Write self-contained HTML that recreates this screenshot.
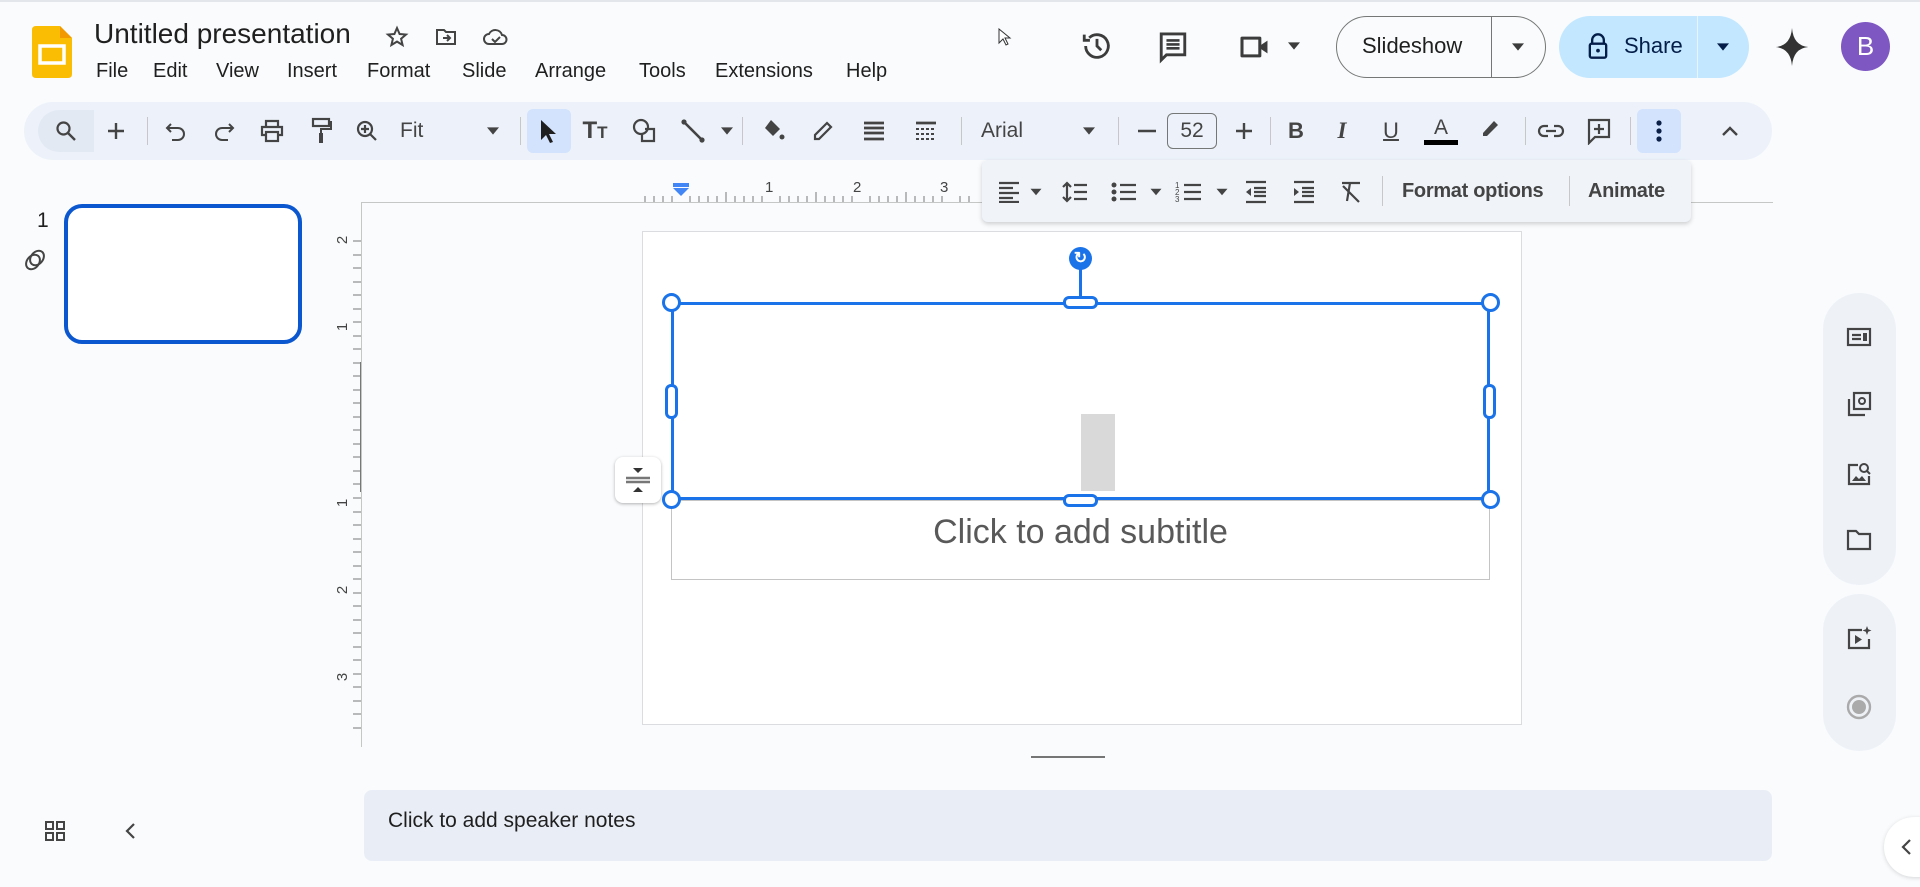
<!DOCTYPE html>
<html><head><meta charset="utf-8"><style>
*{box-sizing:border-box;margin:0;padding:0}
body{width:1920px;height:887px;background:#f9fbfd;font-family:"Liberation Sans",Arial,sans-serif;color:#1f1f1f;position:relative;overflow:hidden}
.a{position:absolute}
.menu{position:absolute;top:60px;font-size:20px;color:#1f1f1f}
.ic{position:absolute;transform:translate(-50%,-50%)}
svg{display:block}
.sep{position:absolute;width:1px;background:#c7c7c7}
.tb{position:absolute;top:131px;transform:translate(-50%,-50%)}
</style></head><body>
<div class="a" style="left:0;top:0;width:1920px;height:2px;background:#e3e6ea"></div>
<svg class="a" style="left:32px;top:26px" width="40" height="52" viewBox="0 0 40 52"><path d="M4 0H28L40 12V48Q40 52 36 52H4Q0 52 0 48V4Q0 0 4 0Z" fill="#fbbc04"/><path d="M28 0L40 12H28Z" fill="#f29900"/><rect x="8" y="20" width="24" height="17" fill="none" stroke="#fff" stroke-width="3.5"/></svg>
<div class="a" style="left:94px;top:18px;font-size:28px;color:#1f1f1f">Untitled presentation</div>
<svg class="ic" style="left:397px;top:37px" width="24" height="24" viewBox="0 0 24 24"><path d="M12 3l2.6 6 6.4.5-4.9 4.2 1.5 6.3L12 16.6 6.4 20l1.5-6.3L3 9.5 9.4 9z" fill="none" stroke="#444" stroke-width="2"/></svg>
<svg class="ic" style="left:446px;top:37px" width="24" height="24" viewBox="0 0 24 24"><path d="M3 5h7l2 2h9v12H3z" fill="none" stroke="#444" stroke-width="2"/><path d="M9 13h7m-3-3l3 3-3 3" fill="none" stroke="#444" stroke-width="2"/></svg>
<svg class="ic" style="left:496px;top:37px" width="28" height="24" viewBox="0 0 28 24"><path d="M7 19a5 5 0 0 1 0-10 7 7 0 0 1 13 1 4.5 4.5 0 0 1 0 9z" fill="none" stroke="#444" stroke-width="2"/><path d="M10 14l3 3 5-5" fill="none" stroke="#444" stroke-width="2"/></svg>
<div class="menu" style="left:96px">File</div><div class="menu" style="left:153px">Edit</div><div class="menu" style="left:216px">View</div><div class="menu" style="left:287px">Insert</div><div class="menu" style="left:367px">Format</div><div class="menu" style="left:462px">Slide</div><div class="menu" style="left:535px">Arrange</div><div class="menu" style="left:639px">Tools</div><div class="menu" style="left:715px">Extensions</div><div class="menu" style="left:846px">Help</div>
<svg class="a" style="left:998px;top:28px" width="14" height="20" viewBox="0 0 14 20"><path d="M1 1v14l4-4 3 6 2-1-3-6h5z" fill="#fff" stroke="#333"/></svg>
<svg class="ic" style="left:1097px;top:46px" width="34" height="34" viewBox="0 0 24 24"><path d="M4 12a8 8 0 1 0 2.5-5.8M3 4v4h4" fill="none" stroke="#3c3c3c" stroke-width="2"/><path d="M12 7v5l3 3" fill="none" stroke="#3c3c3c" stroke-width="2"/></svg>
<svg class="ic" style="left:1173px;top:47px" width="32" height="34" viewBox="0 0 24 26"><path d="M3 3h18v16H7l-4 4z" fill="none" stroke="#3c3c3c" stroke-width="2.2"/><path d="M7 8h10M7 11h10M7 14h10" stroke="#3c3c3c" stroke-width="2"/></svg>
<svg class="ic" style="left:1256px;top:47px" width="36" height="28" viewBox="0 0 28 22"><path d="M3 4h14v14H3z" fill="none" stroke="#3c3c3c" stroke-width="2.4" stroke-linejoin="round"/><path d="M17 10l6-4v10l-6-4z" fill="#3c3c3c"/></svg>
<svg class="ic" style="left:1294px;top:46px" width="12" height="8" viewBox="0 0 10 6"><path d="M0 0h10L5 6z" fill="#3c3c3c"/></svg>
<div class="a" style="left:1336px;top:16px;width:210px;height:62px;border:1px solid #747775;border-radius:31px"></div>
<div class="a" style="left:1362px;top:33px;font-size:22px;color:#1f1f1f">Slideshow</div>
<div class="a" style="left:1491px;top:17px;width:1px;height:60px;background:#747775"></div>
<svg class="ic" style="left:1518px;top:47px" width="12" height="8" viewBox="0 0 10 6"><path d="M0 0h10L5 6z" fill="#3c3c3c"/></svg>
<div class="a" style="left:1559px;top:16px;width:190px;height:62px;background:#c2e7ff;border-radius:31px"></div>
<div class="a" style="left:1697px;top:16px;width:1px;height:62px;background:#e8f4fe"></div>
<svg class="ic" style="left:1598px;top:46px" width="22" height="28" viewBox="0 0 18 24"><path d="M4 10V7a5 5 0 0 1 10 0v3" fill="none" stroke="#041e49" stroke-width="2"/><rect x="2" y="10" width="14" height="12" rx="1.5" fill="none" stroke="#041e49" stroke-width="2"/><circle cx="9" cy="16" r="1.6" fill="#041e49"/></svg>
<div class="a" style="left:1624px;top:33px;font-size:22px;color:#041e49">Share</div>
<svg class="ic" style="left:1723px;top:47px" width="12" height="8" viewBox="0 0 10 6"><path d="M0 0h10L5 6z" fill="#041e49"/></svg>
<svg class="ic" style="left:1792px;top:47px" width="34" height="38" viewBox="0 0 24 28"><path d="M12 0Q13 13 24 14Q13 15 12 28Q11 15 0 14Q11 13 12 0z" fill="#333"/></svg>
<div class="a" style="left:1841px;top:22px;width:49px;height:49px;border-radius:50%;background:#7e57c2;color:#fff;font-size:26px;text-align:center;line-height:49px">B</div>
<div class="a" style="left:24px;top:102px;width:1748px;height:58px;background:#edf2fa;border-radius:29px"></div>
<div class="a" style="left:38px;top:110px;width:56px;height:42px;background:#e3e9f3;border-radius:21px 0 0 21px"></div>
<div class="a" style="left:527px;top:109px;width:44px;height:44px;background:#d3e3fd;border-radius:6px"></div>
<div class="a" style="left:1637px;top:109px;width:44px;height:44px;background:#d3e3fd;border-radius:6px"></div>
<div class="sep" style="left:147px;top:117px;height:28px"></div><div class="sep" style="left:520px;top:117px;height:28px"></div><div class="sep" style="left:742px;top:117px;height:28px"></div><div class="sep" style="left:961px;top:117px;height:28px"></div><div class="sep" style="left:1118px;top:117px;height:28px"></div><div class="sep" style="left:1270px;top:117px;height:28px"></div><div class="sep" style="left:1525px;top:117px;height:28px"></div><div class="sep" style="left:1630px;top:117px;height:28px"></div>
<svg class="tb" style="left:66px" width="24" height="24" viewBox="0 0 24 24"><circle cx="9.5" cy="9.5" r="6" fill="none" stroke="#444" stroke-width="2.2"/><path d="M14 14l7 7" stroke="#444" stroke-width="2.4"/></svg>
<svg class="tb" style="left:116px" width="20" height="20" viewBox="0 0 20 20"><path d="M10 2v16M2 10h16" stroke="#444" stroke-width="2.4"/></svg>
<svg class="tb" style="left:176px" width="22" height="22" viewBox="0 0 22 22"><path d="M6 4L2 8l4 4" fill="none" stroke="#444" stroke-width="2"/><path d="M2 8h11a6 6 0 0 1 0 12H7" fill="none" stroke="#444" stroke-width="2"/></svg>
<svg class="tb" style="left:224px" width="22" height="22" viewBox="0 0 22 22"><path d="M16 4l4 4-4 4" fill="none" stroke="#444" stroke-width="2"/><path d="M20 8H9a6 6 0 0 0 0 12h6" fill="none" stroke="#444" stroke-width="2"/></svg>
<svg class="tb" style="left:272px" width="26" height="24" viewBox="0 0 26 24"><path d="M7 7V2h12v5M7 16H3V8h20v8h-4" fill="none" stroke="#444" stroke-width="2.2"/><rect x="7" y="13" width="12" height="9" fill="none" stroke="#444" stroke-width="2.2"/></svg>
<svg class="tb" style="left:321px" width="22" height="28" viewBox="0 0 22 28"><rect x="3" y="2" width="16" height="7" fill="none" stroke="#444" stroke-width="2.2"/><path d="M19 5h2v7H11v4" fill="none" stroke="#444" stroke-width="2"/><rect x="9" y="16" width="4" height="10" fill="#444"/></svg>
<svg class="tb" style="left:367px" width="24" height="24" viewBox="0 0 24 24"><circle cx="10" cy="10" r="7" fill="none" stroke="#444" stroke-width="2.2"/><path d="M15 15l6 6M10 6v8M6 10h8" stroke="#444" stroke-width="2.2"/></svg>
<div class="a" style="left:400px;top:119px;font-size:21px;color:#444">Fit</div>
<svg class="tb" style="left:493px" width="12" height="8" viewBox="0 0 10 6"><path d="M0 0h10L5 6z" fill="#444"/></svg>
<svg class="tb" style="left:548px" width="20" height="26" viewBox="0 0 20 26"><path d="M3 2v20l5-5 4 8 3-1-4-8h7z" fill="#1f1f1f"/></svg>
<div class="tb" style="left:595px;font-size:24px;font-weight:bold;color:#444">T<span style="font-size:17px">T</span></div>
<svg class="tb" style="left:645px" width="28" height="28" viewBox="0 0 28 28"><circle cx="10" cy="10" r="7" fill="none" stroke="#444" stroke-width="2.2"/><path d="M14 12h9v12H11v-8" fill="none" stroke="#444" stroke-width="2.2"/></svg>
<svg class="tb" style="left:693px" width="26" height="26" viewBox="0 0 26 26"><path d="M4 4l18 18" stroke="#444" stroke-width="2.6"/><circle cx="4" cy="4" r="2.6" fill="#444"/><circle cx="22" cy="22" r="2.6" fill="#444"/></svg>
<svg class="tb" style="left:727px" width="12" height="8" viewBox="0 0 10 6"><path d="M0 0h10L5 6z" fill="#444"/></svg>
<svg class="tb" style="left:773px" width="26" height="26" viewBox="0 0 26 26"><path d="M11 2l9 9-7 7-8-8z" fill="#444"/><circle cx="22" cy="19" r="2.5" fill="#444"/></svg>
<svg class="tb" style="left:823px" width="24" height="24" viewBox="0 0 24 24"><path d="M4 20v-4L16 4l4 4L8 20z" fill="none" stroke="#444" stroke-width="2.2"/></svg>
<svg class="tb" style="left:874px" width="24" height="22" viewBox="0 0 24 22"><path d="M2 3h20M2 8h20M2 13h20M2 19h20" stroke="#444" stroke-width="2.8"/></svg>
<svg class="tb" style="left:926px" width="24" height="22" viewBox="0 0 24 22"><path d="M2 3h20" stroke="#444" stroke-width="2.8"/><path d="M2 9h20M2 14h20M2 19h20" stroke="#444" stroke-width="2" stroke-dasharray="3 2"/></svg>
<div class="a" style="left:981px;top:119px;font-size:21px;color:#444">Arial</div>
<svg class="tb" style="left:1089px" width="12" height="8" viewBox="0 0 10 6"><path d="M0 0h10L5 6z" fill="#444"/></svg>
<svg class="tb" style="left:1147px" width="18" height="4" viewBox="0 0 18 4"><path d="M0 2h18" stroke="#444" stroke-width="2.4"/></svg>
<div class="a" style="left:1167px;top:113px;width:50px;height:36px;border:1px solid #747775;border-radius:6px;font-size:21px;text-align:center;line-height:34px;color:#444">52</div>
<svg class="tb" style="left:1244px" width="20" height="20" viewBox="0 0 20 20"><path d="M10 2v16M2 10h16" stroke="#444" stroke-width="2.4"/></svg>
<div class="tb" style="left:1296px;font-size:22px;font-weight:bold;color:#444">B</div>
<div class="tb" style="left:1342px;font-size:23px;font-weight:bold;font-style:italic;color:#444;font-family:'Liberation Serif',serif">I</div>
<div class="tb" style="left:1391px;font-size:22px;color:#444;text-decoration:underline;text-decoration-thickness:2px">U</div>
<div class="tb" style="left:1441px;top:128px;font-size:21px;color:#444">A</div>
<div class="a" style="left:1424px;top:140px;width:34px;height:5px;background:#000"></div>
<svg class="tb" style="left:1491px;top:128px" width="24" height="24" viewBox="0 0 24 24"><path d="M6 20l-2 0 0-3L15 5l4 4L8 20z" fill="#444"/></svg>
<svg class="tb" style="left:1551px" width="28" height="16" viewBox="0 0 28 16"><path d="M11 3H7a5 5 0 0 0 0 10h4M17 3h4a5 5 0 0 1 0 10h-4M9 8h10" fill="none" stroke="#444" stroke-width="2.2"/></svg>
<svg class="tb" style="left:1599px" width="26" height="28" viewBox="0 0 26 28"><path d="M3 3h20v17H9l-6 6z" fill="none" stroke="#444" stroke-width="2.2"/><path d="M13 7v10M8 12h10" stroke="#444" stroke-width="2.2"/></svg>
<svg class="tb" style="left:1659px" width="6" height="22" viewBox="0 0 6 22"><circle cx="3" cy="3" r="2.6" fill="#0b1f47"/><circle cx="3" cy="11" r="2.6" fill="#0b1f47"/><circle cx="3" cy="19" r="2.6" fill="#0b1f47"/></svg>
<svg class="tb" style="left:1730px" width="18" height="12" viewBox="0 0 18 12"><path d="M2 10l7-7 7 7" fill="none" stroke="#444" stroke-width="2.4"/></svg>
<div class="a" style="left:37px;top:209px;font-size:21px;color:#1f1f1f">1</div>
<svg class="a" style="left:22px;top:245px" width="28" height="28" viewBox="0 0 28 28"><g fill="none" stroke="#444" stroke-width="2"><ellipse cx="11" cy="17" rx="6" ry="8" transform="rotate(40 11 17)"/><ellipse cx="15" cy="13" rx="6" ry="8" transform="rotate(40 15 13)"/></g></svg>
<div class="a" style="left:64px;top:204px;width:238px;height:140px;background:#fff;border:4px solid #0b57d0;border-radius:18px"></div>
<div class="a" style="left:361px;top:202px;width:1412px;height:1px;background:#c4c7c5"></div>
<div class="a" style="left:361px;top:202px;width:1px;height:545px;background:#c4c7c5"></div>
<svg class="a" style="left:640px;top:176px" width="340" height="26" viewBox="0 0 340 26"><g stroke="#777" stroke-width="1"><path d="M5 20v6M14 20v6M23 20v6M32 20v6M50 20v6M59 20v6M68 20v6M77 20v6M86 16v10M95 20v6M104 20v6M113 20v6M122 20v6M140 20v6M149 20v6M158 20v6M167 20v6M176 16v10M185 20v6M194 20v6M203 20v6M212 20v6M230 20v6M239 20v6M248 20v6M257 20v6M266 16v10M275 20v6M284 20v6M293 20v6M302 20v6M320 20v6M329 20v6"/></g><rect x="33" y="7" width="16" height="4" fill="#4285f4"/><path d="M33 12h16l-8 8z" fill="#4285f4"/><text x="125" y="16" font-size="15" fill="#444" font-family="Liberation Sans">1</text><text x="213" y="16" font-size="15" fill="#444" font-family="Liberation Sans">2</text><text x="300" y="16" font-size="15" fill="#444" font-family="Liberation Sans">3</text></svg>
<svg class="a" style="left:330px;top:202px" width="31" height="545" viewBox="0 0 31 545"><g stroke="#777"><path d="M23 39h8M23 53h8M23 66h8M23 80h8M23 93h8M23 107h8M23 120h8M23 134h8M23 147h8M23 161h8M23 174h8M23 188h8M23 201h8M23 215h8M23 228h8M23 242h8M23 255h8M23 269h8M23 282h8M23 296h8M23 310h8M23 323h8M23 337h8M23 350h8M23 364h8M23 377h8M23 391h8M23 404h8M23 418h8M23 431h8M23 445h8M23 458h8M23 472h8M23 485h8M23 499h8M23 512h8M23 526h8"/><path d="M31 160v130" stroke-width="2"/></g><g font-size="15" fill="#444" font-family="Liberation Sans"><text transform="translate(17 38) rotate(-90)" text-anchor="middle">2</text><text transform="translate(17 125) rotate(-90)" text-anchor="middle">1</text><text transform="translate(17 301) rotate(-90)" text-anchor="middle">1</text><text transform="translate(17 388) rotate(-90)" text-anchor="middle">2</text><text transform="translate(17 475) rotate(-90)" text-anchor="middle">3</text></g></svg>
<div class="a" style="left:642px;top:231px;width:880px;height:494px;background:#fff;border:1px solid #dadce0"></div>
<div class="a" style="left:671px;top:500px;width:819px;height:80px;border:1px solid #c4c4c4"></div>
<div class="a" style="left:671px;top:513px;width:819px;text-align:center;font-size:34px;color:#595959">Click to add subtitle</div>
<div class="a" style="left:1081px;top:414px;width:34px;height:77px;background:#d9d9d9"></div>
<div class="a" style="left:671px;top:302px;width:819px;height:198px;border:3px solid #1a73e8"></div>
<div class="a" style="left:1079px;top:265px;width:3px;height:36px;background:#1a73e8"></div>
<div class="a" style="left:1069px;top:247px;width:23px;height:23px;border-radius:50%;background:#1a73e8;color:#fff;font-size:16px;text-align:center;line-height:23px;font-weight:bold">↻</div>
<div class="a" style="left:662px;top:293px;width:19px;height:19px;border:3px solid #1a73e8;background:#fff;border-radius:50%"></div>
<div class="a" style="left:1481px;top:293px;width:19px;height:19px;border:3px solid #1a73e8;background:#fff;border-radius:50%"></div>
<div class="a" style="left:662px;top:490px;width:19px;height:19px;border:3px solid #1a73e8;background:#fff;border-radius:50%"></div>
<div class="a" style="left:1481px;top:490px;width:19px;height:19px;border:3px solid #1a73e8;background:#fff;border-radius:50%"></div>
<div class="a" style="left:1063px;top:296px;width:35px;height:13px;border:3px solid #1a73e8;background:#fff;border-radius:6px"></div>
<div class="a" style="left:1063px;top:494px;width:35px;height:13px;border:3px solid #1a73e8;background:#fff;border-radius:6px"></div>
<div class="a" style="left:665px;top:384px;width:13px;height:35px;border:3px solid #1a73e8;background:#fff;border-radius:6px"></div>
<div class="a" style="left:1483px;top:384px;width:13px;height:35px;border:3px solid #1a73e8;background:#fff;border-radius:6px"></div>
<div class="a" style="left:615px;top:457px;width:46px;height:46px;background:#fff;border-radius:8px;box-shadow:0 1px 3px rgba(0,0,0,.3)"></div>
<svg class="a" style="left:624px;top:466px" width="28" height="28" viewBox="0 0 28 28"><path d="M9 2h10l-5 5z M9 26h10l-5-5z" fill="#333"/><path d="M2 12h24M2 16h24" stroke="#777" stroke-width="2.4"/></svg>
<div class="a" style="left:982px;top:160px;width:709px;height:62px;background:#f0f4f9;border-radius:6px;box-shadow:0 2px 5px rgba(0,0,0,.18)"></div>
<svg class="ic" style="left:1009px;top:192px" width="24" height="22" viewBox="0 0 24 22"><path d="M2 2h20M2 7h14M2 12h20M2 17h14M2 21h20" stroke="#444" stroke-width="2.2"/></svg>
<svg class="ic" style="left:1036px;top:192px" width="11" height="7" viewBox="0 0 10 6"><path d="M0 0h10L5 6z" fill="#444"/></svg>
<svg class="ic" style="left:1075px;top:192px" width="28" height="24" viewBox="0 0 28 24"><path d="M6 3v18M2 7l4-4 4 4M2 17l4 4 4-4M13 5h13M13 12h13M13 19h13" fill="none" stroke="#444" stroke-width="2.2"/></svg>
<svg class="ic" style="left:1124px;top:192px" width="28" height="22" viewBox="0 0 28 22"><circle cx="4" cy="4" r="2.5" fill="#444"/><circle cx="4" cy="11" r="2.5" fill="#444"/><circle cx="4" cy="18" r="2.5" fill="#444"/><path d="M10 4h16M10 11h16M10 18h16" stroke="#444" stroke-width="2.2"/></svg>
<svg class="ic" style="left:1156px;top:192px" width="11" height="7" viewBox="0 0 10 6"><path d="M0 0h10L5 6z" fill="#444"/></svg>
<svg class="ic" style="left:1189px;top:192px" width="28" height="24" viewBox="0 0 28 24"><text x="0" y="8" font-size="8" fill="#444" font-family="Liberation Sans">1</text><text x="0" y="15" font-size="8" fill="#444" font-family="Liberation Sans">2</text><text x="0" y="22" font-size="8" fill="#444" font-family="Liberation Sans">3</text><path d="M9 5h17M9 12h17M9 19h17" stroke="#444" stroke-width="2.2"/></svg>
<svg class="ic" style="left:1222px;top:192px" width="11" height="7" viewBox="0 0 10 6"><path d="M0 0h10L5 6z" fill="#444"/></svg>
<svg class="ic" style="left:1256px;top:192px" width="24" height="24" viewBox="0 0 24 24"><path d="M2 2h20M10 8h12M10 12h12M10 16h12M2 22h20" stroke="#444" stroke-width="2.2"/><path d="M7 8v8l-5-4z" fill="#444"/></svg>
<svg class="ic" style="left:1304px;top:192px" width="24" height="24" viewBox="0 0 24 24"><path d="M2 2h20M10 8h12M10 12h12M10 16h12M2 22h20" stroke="#444" stroke-width="2.2"/><path d="M2 8v8l5-4z" fill="#444"/></svg>
<svg class="ic" style="left:1351px;top:192px" width="24" height="24" viewBox="0 0 24 24"><path d="M3 3h18M11 3l-3 18M4 6l16 16" stroke="#444" stroke-width="2.2"/></svg>
<div class="sep" style="left:1382px;top:176px;height:30px"></div>
<div class="a" style="left:1402px;top:180px;font-size:20px;color:#444;font-weight:bold;letter-spacing:-.3px">Format options</div>
<div class="sep" style="left:1569px;top:176px;height:30px"></div>
<div class="a" style="left:1588px;top:180px;font-size:20px;color:#444;font-weight:bold;letter-spacing:-.3px">Animate</div>
<div class="a" style="left:1031px;top:756px;width:74px;height:2px;background:#757575"></div>
<div class="a" style="left:364px;top:790px;width:1408px;height:71px;background:#e9eef6;border-radius:8px"></div>
<div class="a" style="left:388px;top:809px;font-size:21px;color:#1f1f1f">Click to add speaker notes</div>
<svg class="ic" style="left:55px;top:831px" width="22" height="22" viewBox="0 0 22 22"><g fill="none" stroke="#444" stroke-width="2"><rect x="2" y="2" width="7" height="7"/><rect x="13" y="2" width="7" height="7"/><rect x="2" y="13" width="7" height="7"/><rect x="13" y="13" width="7" height="7"/></g></svg>
<svg class="ic" style="left:130px;top:831px" width="12" height="18" viewBox="0 0 12 18"><path d="M10 2L3 9l7 7" fill="none" stroke="#444" stroke-width="2.2"/></svg>
<div class="a" style="left:1823px;top:293px;width:73px;height:292px;background:#eef2f7;border-radius:37px"></div>
<div class="a" style="left:1823px;top:594px;width:73px;height:157px;background:#eef2f7;border-radius:37px"></div>
<svg class="ic" style="left:1859px;top:337px" width="26" height="20" viewBox="0 0 26 20"><rect x="2" y="2" width="22" height="16" fill="none" stroke="#444" stroke-width="2.2"/><path d="M6 8h9M6 12h9" stroke="#444" stroke-width="2.2"/><rect x="17" y="6" width="4" height="8" fill="#444"/></svg>
<svg class="ic" style="left:1859px;top:404px" width="26" height="26" viewBox="0 0 26 26"><rect x="8" y="2" width="16" height="16" fill="none" stroke="#444" stroke-width="2.2"/><circle cx="16" cy="10" r="3" fill="none" stroke="#444" stroke-width="2"/><path d="M3 8v16h16" fill="none" stroke="#444" stroke-width="2.2"/></svg>
<svg class="ic" style="left:1859px;top:474px" width="26" height="26" viewBox="0 0 26 26"><path d="M12 4H3v19h20v-8" fill="none" stroke="#444" stroke-width="2.2"/><path d="M6 20l4-5 3 3 3-3 4 5z" fill="#444"/><circle cx="18" cy="7" r="4" fill="none" stroke="#444" stroke-width="2"/><path d="M21 10l3 3" stroke="#444" stroke-width="2"/></svg>
<svg class="ic" style="left:1859px;top:540px" width="26" height="22" viewBox="0 0 26 22"><path d="M2 2h8l3 3h11v15H2z" fill="none" stroke="#444" stroke-width="2.2"/></svg>
<svg class="ic" style="left:1859px;top:638px" width="26" height="26" viewBox="0 0 26 26"><path d="M16 5H3v18h20v-9" fill="none" stroke="#444" stroke-width="2.2"/><path d="M9 10v9l7-4.5z" fill="#444"/><path d="M21 1l1.2 3.3L25.5 5.5 22.2 6.7 21 10 19.8 6.7 16.5 5.5 19.8 4.3z" fill="#444"/></svg>
<svg class="ic" style="left:1859px;top:707px" width="26" height="26" viewBox="0 0 26 26"><circle cx="13" cy="13" r="11" fill="none" stroke="#aaa" stroke-width="2.4"/><circle cx="13" cy="13" r="7" fill="#aaa"/></svg>
<div class="a" style="left:1884px;top:817px;width:70px;height:60px;background:#fff;border-radius:30px;box-shadow:0 1px 4px rgba(0,0,0,.15)"></div>
<svg class="ic" style="left:1906px;top:847px" width="12" height="18" viewBox="0 0 12 18"><path d="M10 2L3 9l7 7" fill="none" stroke="#444" stroke-width="2.2"/></svg>
</body></html>
